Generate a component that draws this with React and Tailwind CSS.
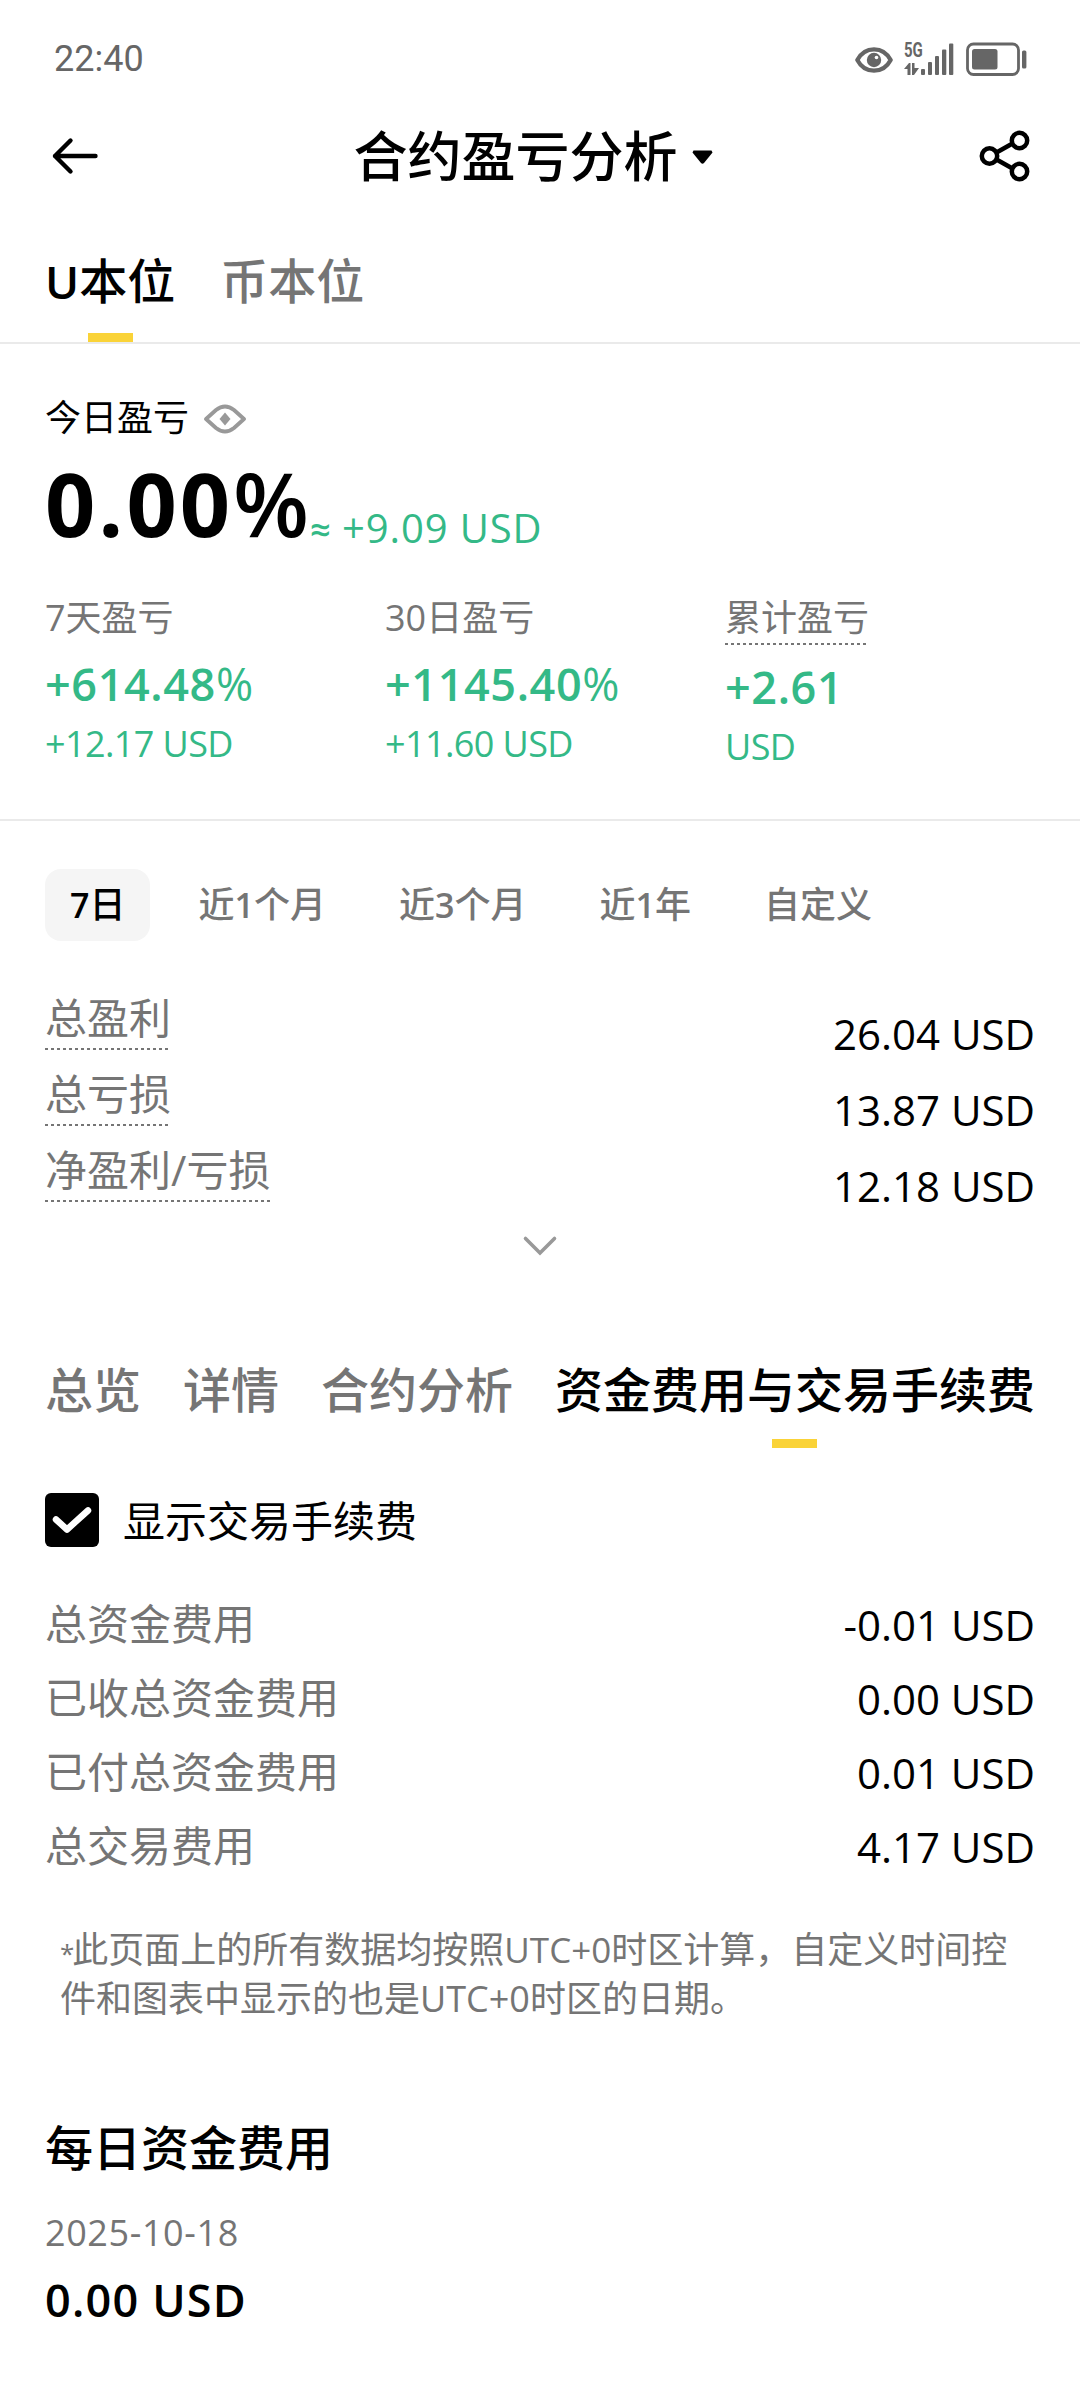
import { useState } from 'react';

const pnlColumns = [
  { label: '7天盈亏', value: '+614.48', unit: '%', sub: '+12.17 USD' },
  { label: '30日盈亏', value: '+1145.40', unit: '%', sub: '+11.60 USD' },
  { label: '累计盈亏', value: '+2.61', sub: 'USD', dashed: true },
];

const ranges = ['7日', '近1个月', '近3个月', '近1年', '自定义'];

const totals = [
  { label: '总盈利', value: '26.04 USD' },
  { label: '总亏损', value: '13.87 USD' },
  { label: '净盈利/亏损', value: '12.18 USD' },
];

const sections = ['总览', '详情', '合约分析', '资金费用与交易手续费'];

const fees = [
  { label: '总资金费用', value: '-0.01 USD' },
  { label: '已收总资金费用', value: '0.00 USD' },
  { label: '已付总资金费用', value: '0.01 USD' },
  { label: '总交易费用', value: '4.17 USD' },
];

const DashedLine = () => (
  <div className="h-[2px] bg-[repeating-linear-gradient(90deg,#757575_0_3px,transparent_3px_6px)]"></div>
);

// digits need a heavier weight than the characters around them
const RangeLabel = ({ text }) => (
  <>
    {text.split(/(\d)/).map((part, index) => (
      /\d/.test(part) ? <span key={index} className="text-[34px] font-semibold">{part}</span> : part
    ))}
  </>
);

const StatusBar = () => (
  <div className="flex h-[118px] items-center justify-between pl-[54px] pr-[53px] text-[#666]">
    <span className="font-[Roboto] text-[36px] leading-none">22:40</span>
    <div className="flex items-center">
      <svg className="mt-[2px]" width="38" height="26" viewBox="0 0 38 26" fill="none">
        <path d="M2.3 13C6 6 12 2.3 19 2.3S32 6 35.7 13C32 20 26 23.7 19 23.7S6 20 2.3 13Z" stroke="currentColor" strokeWidth="4.2" strokeLinejoin="round" />
        <circle cx="19" cy="13" r="7.2" fill="currentColor" />
        <circle cx="21.5" cy="10.5" r="1.8" fill="white" />
      </svg>
      <div className="ml-[11px] flex h-[32px] w-[50px] items-end">
        <div className="flex h-full w-[17px] flex-col justify-between">
          <span className="origin-left scale-x-75 font-[Roboto] text-[20px] font-bold leading-[15px]">5G</span>
          <svg width="15" height="12" viewBox="0 0 15 12" fill="currentColor">
            <path d="M0 6 5 0H6.500V12H3.500V6ZM8 0H10.500V5H15L10 12H8Z" />
          </svg>
        </div>
        <svg width="33" height="32" viewBox="0 0 33 32" fill="currentColor">
          <rect x="0" y="26" width="4" height="6" rx="1" />
          <rect x="7" y="19" width="4" height="13" rx="1" />
          <rect x="14" y="13" width="4" height="19" rx="1" />
          <rect x="21" y="6.5" width="4.3" height="25.5" rx="1" />
          <rect x="28" y="0.5" width="4.3" height="31.5" rx="1" />
        </svg>
      </div>
      <svg className="ml-[12px]" width="61" height="34" viewBox="0 0 61 34">
        <rect x="1.5" y="2" width="51" height="30.5" rx="6" fill="none" stroke="currentColor" strokeWidth="2.8" />
        <rect x="6" y="7" width="25.5" height="20.5" rx="2.5" fill="currentColor" />
        <rect x="56" y="8.5" width="4.4" height="18" rx="1.5" fill="currentColor" />
      </svg>
    </div>
  </div>
);

const Header = () => (
  <div className="flex h-[76px] items-center justify-between pl-[51px] pr-[49px]">
    <svg width="48" height="40" viewBox="0 0 48 40" fill="none" stroke="black" strokeWidth="4.4" strokeLinecap="round" strokeLinejoin="round">
      <path d="M44.5 20H4M19.5 4.5 4 20 19.5 35.5" />
    </svg>
    <div className="mr-[10px] flex items-center">
      <h1 className="text-[54px] font-medium leading-[72px]">合约盈亏分析</h1>
      <svg className="ml-[14px] mt-[2px]" width="21" height="15" viewBox="0 0 21 15">
        <path d="M1.5 0.5H19.5L20.5 2.5 12 13Q10.5 14.5 9 13L0.5 2.5Z" fill="black" />
      </svg>
    </div>
    <svg width="54" height="54" viewBox="0 0 54 54" fill="none" stroke="black" strokeWidth="4.5">
      <circle cx="12.5" cy="27" r="7.7" />
      <circle cx="42.5" cy="11.5" r="7.7" />
      <circle cx="42.5" cy="42.5" r="7.7" />
      <path d="M19.5 23.5 35.5 14.5M19.5 30.5 35.5 39.5" />
    </svg>
  </div>
);

const App = () => {
  const [range, setRange] = useState('7日');
  const [section, setSection] = useState('资金费用与交易手续费');
  const [showFees, setShowFees] = useState(true);

  return (
    <div className="h-[2388px] w-[1080px] overflow-hidden bg-white font-['Open_Sans','Noto_Sans_CJK_SC',sans-serif] text-black">
      <StatusBar />
      <Header />

      <div className="flex h-[150px] gap-[45px] border-b-2 border-[#eaeaea] px-[45px] pt-[55px] text-[48px] font-medium leading-[64px]">
        <div className="flex flex-col items-center">
          <span><span className="text-[46px] font-semibold">U</span>本位</span>
          <div className="mt-5 h-[9px] w-[45px] bg-[#fad338]"></div>
        </div>
        <span className="text-[#757575]">币本位</span>
      </div>

      <div className="h-[477px] border-b-2 border-[#eaeaea] px-[45px] pt-[50px]">
        <div className="flex items-center text-[36px] leading-[48px]">
          <span>今日盈亏</span>
          <svg className="ml-[14px] mt-[2px]" width="44" height="30" viewBox="0 0 44 30">
            <path d="M3 15 13 6Q22 -1 31 6L41 15 31 24Q22 31 13 24Z" fill="none" stroke="#999" strokeWidth="3.8" strokeLinejoin="round" />
            <path d="M22 8.5 27.5 15 22 21.5 16.5 15Z" fill="#999" />
          </svg>
        </div>
        <div className="mt-[13px] flex items-end gap-[3px]">
          <span className="text-[88px] font-bold leading-[96px] tracking-[3px]">
            0.00<span className="font-semibold tracking-[-2px]">%</span>
          </span>
          <span className="text-[40px] leading-[43px] tracking-[0.9px] text-[#34b987]"><span className="text-[36px] font-semibold tracking-normal">≈</span> +9.09 USD</span>
        </div>
        <div className="mt-[43px] flex">
          {pnlColumns.map(col => (
            <div key={col.label} className="flex w-[340px] shrink-0 flex-col items-start">
              <div className="text-[36px] leading-[48px] text-[#757575]">
                {col.label}
                {col.dashed && <div className="pt-px"><DashedLine /></div>}
              </div>
              <div className="mt-[16px] text-[45px] font-semibold leading-[52px] tracking-[0.6px] text-[#34b987]">
                {col.value}
                {col.unit && <span className="font-normal tracking-normal">{col.unit}</span>}
              </div>
              <div className="mt-[12px] text-[36px] leading-[44px] tracking-[-0.6px] text-[#34b987]">{col.sub}</div>
            </div>
          ))}
        </div>
      </div>

      <div className="mt-[48px] flex gap-[23px] px-[45px]">
        {ranges.map(item => (
          <button
            key={item}
            onClick={() => setRange(item)}
            className={`h-[72px] rounded-[16px] px-[25px] text-[36px] font-medium ${range === item ? 'bg-[#f5f5f5] text-black' : 'text-[#757575]'}`}
          >
            <RangeLabel text={item} />
          </button>
        ))}
      </div>

      <div className="mt-[52px] px-[45px] text-[42px] leading-[50px]">
        {totals.map(row => (
          <div key={row.label} className="flex h-[76px] items-start justify-between">
            <div className="text-[#757575]">
              {row.label}
              <div className="pt-[5px]"><DashedLine /></div>
            </div>
            <span className="pt-[16px]">{row.value}</span>
          </div>
        ))}
      </div>

      <div className="mt-[13px] flex justify-center">
        <svg width="36" height="24" viewBox="0 0 36 24" fill="none" stroke="#999" strokeWidth="3.6" strokeLinecap="round">
          <path d="M3.5 4.5 18 19 32.5 4.5" />
        </svg>
      </div>

      <div className="mt-[100px] flex justify-between px-[45px] text-[48px] font-medium leading-[64px]">
        {sections.map(item => (
          <button key={item} onClick={() => setSection(item)} className={`flex h-[90px] flex-col items-center ${section === item ? 'text-black' : 'text-[#757575]'}`}>
            <span>{item}</span>
            {section === item && <div className="mt-[17px] h-[9px] w-[45px] bg-[#fad338]"></div>}
          </button>
        ))}
      </div>

      <div className="mt-[45px] flex h-[54px] items-center px-[45px]" onClick={() => setShowFees(!showFees)}>
        <div className="h-[54px] w-[54px] rounded-[6px] bg-black">
          {showFees && (
            <svg width="54" height="54" viewBox="0 0 54 54" fill="none" stroke="white" strokeWidth="6.5" strokeLinecap="round" strokeLinejoin="round">
              <path d="M11 26.5 22 36.5 43 17.5" />
            </svg>
          )}
        </div>
        <span className="ml-[24px] text-[42px]">显示交易手续费</span>
      </div>

      <div className="mt-[40px] px-[45px] text-[42px] leading-[74px]">
        {fees.map(row => (
          <div key={row.label} className="flex h-[74px] justify-between">
            <span className="text-[#757575]">{row.label}</span>
            <span className="pt-px">{row.value}</span>
          </div>
        ))}
      </div>

      <p className="mt-[42px] h-[98px] whitespace-nowrap px-[60px] text-[36px] leading-[49px] text-[#757575]">
        <span className="text-[26px] leading-none tracking-[-2px]">*</span>此页面上的所有数据均按照<span className="text-[35px] leading-none">UTC+0</span>时区计算，自定义时间控
        <br />
        件和图表中显示的也是UTC+0时区的日期。
      </p>

      <div className="mt-[95px] px-[45px]">
        <h2 className="text-[48px] font-medium leading-[60px]">每日资金费用</h2>
        <div className="mt-[33px] text-[36px] leading-[44px] tracking-[0.6px] text-[#757575]">2025-10-18</div>
        <div className="mt-[17px] text-[45px] font-semibold leading-[56px] tracking-[1.2px]">0.00 USD</div>
      </div>
    </div>
  );
};

export default App;
